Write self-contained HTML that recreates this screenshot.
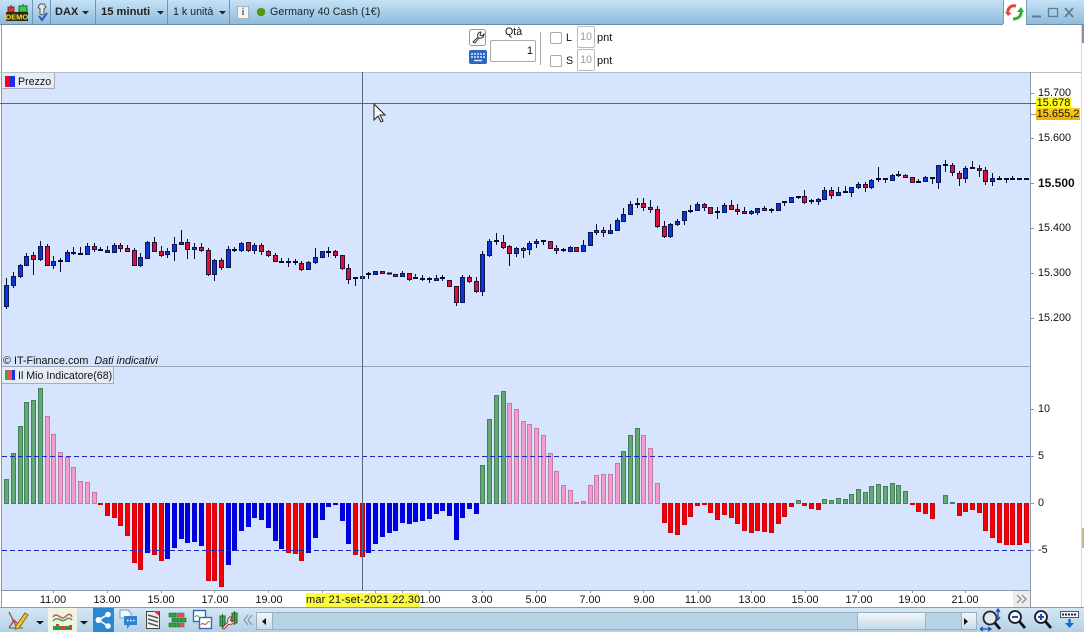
<!DOCTYPE html>
<html lang="it"><head><meta charset="utf-8"><title>DAX</title>
<style>
html,body{margin:0;padding:0;background:#fff}
#a{position:relative;width:1084px;height:632px;overflow:hidden;background:#fff;font-family:"Liberation Sans",Arial,sans-serif;font-size:10.67px;color:#111}
#a div,#a svg{position:absolute}
.t{white-space:nowrap;line-height:14px}
.s{width:1px;top:0;height:24px;background:#6f94b4}
.c{text-align:center;width:40px;top:593px;font-size:10.8px}
.p{left:1038px;font-size:10.8px}
.cb{width:10px;height:10px;border:1px solid #a9a9a9;border-radius:2px;background:#fff;left:550px}
.sp{left:577px;width:16px;height:20px;border:1px solid #bbb;border-radius:2px;color:#999;text-align:center;line-height:20px;background:#fff;font-size:10.67px}
</style></head><body><div id="a">

<div style="left:0;top:0;width:1084px;height:24px;background:linear-gradient(#c5e2f6,#90bbdc)"></div>
<div style="left:0;top:24px;width:1084px;height:1px;background:#6d8aa3"></div>
<div class="s" style="left:32px"></div><div class="s" style="left:50px"></div><div class="s" style="left:95px"></div><div class="s" style="left:167px"></div><div class="s" style="left:229px"></div>
<svg style="left:5px;top:4px" width="24" height="18" viewBox="0 0 24 18"><path d="M6 1v7M18 0v7" stroke="#333"/><rect x="3" y="3" width="6" height="5" fill="#d33" stroke="#733"/><rect x="14" y="2" width="8" height="6" fill="#3c5" stroke="#263"/><rect x="1" y="8" width="22" height="9" fill="#2a2a10"/><text x="12" y="15.500" font-family="Liberation Sans" font-size="7.500" font-weight="bold" fill="#ffe030" text-anchor="middle">DEMO</text></svg>
<svg style="left:36px;top:3px" width="14" height="20" viewBox="0 0 14 20"><path d="M4 1h4l2 3-2 2v5l-2 1-2-1V6L2 4z" fill="#dbe6ee" stroke="#555"/><path d="M3 13l3 4 5-7" fill="none" stroke="#2a5fb0" stroke-width="2"/></svg>
<div class="t" style="left:55px;top:5px;font-weight:bold;font-size:11px;color:#222">DAX</div>
<div class="t" style="left:101px;top:5px;font-weight:bold;font-size:11.2px;color:#222">15 minuti</div>
<div class="t" style="left:173px;top:5px;color:#222">1 k unità</div>
<svg style="left:0;top:0" width="240" height="24"><path d="M82 11h7l-3.500 3.500zM157 11h7l-3.500 3.500zM219 11h7l-3.500 3.500z" fill="#222"/></svg>
<div style="left:237px;top:6px;width:10px;height:11px;background:#f4f4f0;border:1px solid #a8b4bc;color:#666;font:bold 10px/11px 'Liberation Serif',serif;text-align:center">i</div>
<svg style="left:256px;top:7px" width="10" height="10"><circle cx="5" cy="5" r="4.300" fill="#4f9a12"/></svg>
<div class="t" style="left:270px;top:5px;color:#222;letter-spacing:.1px">Germany 40 Cash (1€)</div>

<div style="left:1003px;top:0;width:23px;height:25px;background:#fff"></div>
<div style="left:1003px;top:0;width:1px;height:24px;background:#7c9ab4"></div>
<div style="left:1026px;top:0;width:1px;height:24px;background:#7c9ab4"></div>
<svg style="left:1005px;top:3px" width="20" height="19" viewBox="0 0 20 19"><path d="M3 11C2 5 6 2 11 3" fill="none" stroke="#e0463e" stroke-width="3"/><path d="M0 9l3 4 4-3z" fill="#e0463e"/><path d="M16 7c1 6-3 9-8 9" fill="none" stroke="#2cae3c" stroke-width="3"/><path d="M12 9l4-5 3 5z" fill="#2cae3c"/></svg>
<svg style="left:1030px;top:5px" width="50" height="14" viewBox="0 0 50 14"><path d="M2 11.500h9" stroke="#627b94" stroke-width="2"/><rect x="18.500" y="3.500" width="9" height="8" fill="none" stroke="#627b94" stroke-width="1.300"/><path d="M35 3l8 9M43 3l-8 9" stroke="#627b94" stroke-width="1.800"/></svg>

<div style="left:1px;top:25px;width:1px;height:583px;background:#8b97a3"></div>
<div style="left:1081px;top:25px;width:1px;height:583px;background:#d8d8d8"></div>
<div style="left:1082px;top:25px;width:2px;height:18px;background:#7f93a8"></div>
<div style="left:1082px;top:528px;width:2px;height:20px;background:#c8b890"></div>

<svg style="left:469px;top:29px" width="19" height="36" viewBox="0 0 19 36"><rect x=".5" y=".5" width="16" height="16" rx="2" fill="#fff" stroke="#999"/><path d="M4 13l5-5c-1-2 0-5 3-5l-1 3 2 1 2-2c0 3-2 5-5 4l-4 5z" fill="#fff" stroke="#333"/><rect y="21" width="18" height="14" rx="2" fill="#2a68c4"/><path d="M2 25h14M2 28h14" stroke="#dfeaff" stroke-width="1.500" stroke-dasharray="2 1"/><path d="M5 31.500h8" stroke="#dfeaff" stroke-width="1.500"/></svg>
<div class="t" style="left:505px;top:25px">Qtà</div>
<div style="left:490px;top:40px;width:44px;height:20px;border:1px solid #aaa;border-radius:2px;background:#fff;text-align:right;line-height:21px;font-size:11px"><span style="margin-right:2px">1</span></div>
<div style="left:540px;top:32px;width:1px;height:33px;background:#aaa"></div>
<div class="cb" style="top:32px"></div><div class="t" style="left:566px;top:31px">L</div>
<div class="sp" style="top:26px">10</div><div class="t" style="left:597px;top:31px;font-size:11px">pnt</div>
<div class="cb" style="top:55px"></div><div class="t" style="left:566px;top:54px">S</div>
<div class="sp" style="top:49px">10</div><div class="t" style="left:597px;top:54px;font-size:11px">pnt</div>

<div style="left:2px;top:72px;width:1028px;height:518px;background:#d6e4fd"></div>
<div style="left:0;top:72px;width:1081px;height:1px;background:#b4bfcc"></div>
<div style="left:1030px;top:72px;width:1px;height:536px;background:#8f9aa6"></div>
<div style="left:2px;top:366px;width:1028px;height:1px;background:#98a4b2"></div>
<div style="left:2px;top:590px;width:1028px;height:1px;background:#8f9aa6"></div>

<svg style="left:0;top:0" width="1084" height="632">
<path stroke="#050a30" fill="none" d="M6.500 278V309M13.500 272V288M20.500 264V278M26.500 253V266M33.500 252V275M40.500 241V261M47.500 244V266M53.500 256V269M60.500 258V272M67.500 250V262M73.500 247V255M80.500 247V255M87.500 243V255M94.500 243V252M100.500 247V251M107.500 246V253M114.500 243V253M120.500 243V252M127.500 245V252M134.500 248V266M140.500 253V267M147.500 241V259M154.500 237V252M161.500 246V257M167.500 248V258M174.500 237V261M181.500 230V245M187.500 239V259M194.500 243V259M201.500 243V252M208.500 248V276M214.500 259V281M221.500 258V270M228.500 246V267M234.500 247V252M241.500 242V252M248.500 242V252M254.500 243V254M261.500 243V255M268.500 250V257M275.500 253V262M281.500 258V263M288.500 258V267M295.500 259V265M301.500 261V271M308.500 261V270M315.500 248V264M322.500 251V258M328.500 247V257M335.500 250V258M342.500 255V270M348.500 264V284M355.500 278V286M362.500 270V283M368.500 272V279M395.500 274V277M402.500 271V276M409.500 273V281M415.500 274V279M422.500 275V281M429.500 277V283M436.500 275V280M442.500 275V281M449.500 280V287M456.500 286V306M462.500 275V302M469.500 275V283M476.500 277V293M482.500 251V296M489.500 239V257M496.500 233V245M503.500 235V249M509.500 245V266M516.500 247V257M523.500 247V258M529.500 241V255M536.500 239V248M543.500 240V245M550.500 241V249M556.500 245V254M563.500 248V252M570.500 246V252M576.500 247V252M583.500 240V252M596.500 224V235M603.500 227V237M610.500 224V234M617.500 218V230M623.500 208V222M630.500 201V215M637.500 198V208M643.500 198V211M650.500 200V213M657.500 206V228M664.500 221V238M670.500 223V238M677.500 219V226M684.500 211V225M690.500 205V213M697.500 202V210M704.500 203V211M710.500 207V214M717.500 207V219M724.500 203V213M731.500 200V210M737.500 204V215M744.500 207V214M751.500 210V215M757.500 208V215M764.500 206V211M771.500 208V213M778.500 203V211M784.500 201V206M791.500 197V203M798.500 196V199M804.500 190V204M811.500 199V204M818.500 198V205M824.500 187V200M831.500 187V199M838.500 187V195M845.500 186V192M851.500 187V197M858.500 182V189M865.500 182V192M871.500 179V189M878.500 167V182M885.500 178V183M892.500 174V181M898.500 171V177M905.500 174V178M918.500 179V183M925.500 176V182M932.500 177V184M938.500 165V189M945.500 160V172M952.500 163V176M959.500 171V186M965.500 166V183M972.500 161V169M979.500 165V177M985.500 167V185M992.500 173V186M999.500 176V180M1006.500 178V183M1012.500 176V180"/>
<path stroke="#050a30" stroke-width="2" fill="none" d="M58 261h5M71 253h5M78 254h5M98 250h5M232 250h5M279 262h5M286 262h5M293 262h5M326 252h5M353 278h5M366 274h5M387 273.500h5M413 278h5M420 279h5M427 279h5M440 278h5M494 241h5M541 241h5M561 250h5M635 204h5M688 211h5M715 212h5M769 210h5M782 202h5M796 197h5M809 201h5M843 192h5M883 179h5M876 179h5M896 175h5M916 182h5M930 178h5M943 165h5M970 168h5M997 179h5M1004 179h5M1010 179h5M1017 179h5M1024 179h5"/>
<path stroke="#0a1650" fill="#0c36d8" d="M4.500 285.500h4v21h-4zM11.500 276.500h4v9h-4zM18.500 265.500h4v11h-4zM24.500 256.500h4v9h-4zM38.500 246.500h4v13h-4zM51.500 261.500h4v4h-4zM65.500 252.500h4v9h-4zM85.500 246.500h4v8h-4zM105.500 250.500h4v2h-4zM112.500 245.500h4v7h-4zM138.500 257.500h4v8h-4zM145.500 242.500h4v16h-4zM165.500 251.500h4v3h-4zM172.500 244.500h4v7h-4zM179.500 242.500h4v2h-4zM192.500 247.500h4v2h-4zM212.500 260.500h4v14h-4zM226.500 249.500h4v18h-4zM239.500 243.500h4v7h-4zM252.500 245.500h4v5h-4zM306.500 262.500h4v7h-4zM313.500 257.500h4v5h-4zM320.500 251.500h4v6h-4zM360.500 276.500h4v2h-4zM373.500 271.500h4v3h-4zM400.500 273.500h4v3h-4zM434.500 278.500h4v2h-4zM460.500 277.500h4v25h-4zM480.500 254.500h4v37h-4zM487.500 241.500h4v14h-4zM514.500 248.500h4v5h-4zM527.500 243.500h4v6h-4zM534.500 241.500h4v2h-4zM568.500 247.500h4v4h-4zM581.500 245.500h4v6h-4zM588.500 232.500h4v13h-4zM594.500 230.500h4v2h-4zM608.500 230.500h4v3h-4zM615.500 220.500h4v10h-4zM621.500 214.500h4v7h-4zM628.500 204.500h4v10h-4zM668.500 224.500h4v12h-4zM675.500 221.500h4v3h-4zM682.500 211.500h4v9h-4zM695.500 204.500h4v6h-4zM722.500 205.500h4v7h-4zM749.500 211.500h4v2h-4zM755.500 208.500h4v4h-4zM776.500 203.500h4v7h-4zM789.500 197.500h4v5h-4zM816.500 199.500h4v2h-4zM822.500 190.500h4v9h-4zM836.500 192.500h4v3h-4zM849.500 187.500h4v5h-4zM856.500 184.500h4v3h-4zM869.500 180.500h4v7h-4zM890.500 175.500h4v5h-4zM923.500 177.500h4v4h-4zM936.500 165.500h4v17h-4zM963.500 168.500h4v10h-4zM990.500 178.500h4v3h-4z"/>
<path stroke="#2a1030" fill="#d8103c" d="M31.500 255.500h4v4h-4zM45.500 246.500h4v19h-4zM92.500 246.500h4v3h-4zM118.500 245.500h4v3h-4zM125.500 248.500h4v3h-4zM132.500 250.500h4v15h-4zM152.500 242.500h4v9h-4zM159.500 251.500h4v4h-4zM185.500 242.500h4v7h-4zM199.500 247.500h4v3h-4zM206.500 250.500h4v24h-4zM219.500 260.500h4v7h-4zM246.500 242.500h4v8h-4zM259.500 245.500h4v6h-4zM266.500 251.500h4v4h-4zM273.500 255.500h4v6h-4zM299.500 263.500h4v6h-4zM333.500 251.500h4v4h-4zM340.500 255.500h4v13h-4zM346.500 268.500h4v11h-4zM380.500 271.500h4v2h-4zM393.500 274.500h4v2h-4zM407.500 273.500h4v6h-4zM447.500 280.500h4v6h-4zM454.500 286.500h4v16h-4zM467.500 277.500h4v4h-4zM474.500 281.500h4v10h-4zM501.500 242.500h4v5h-4zM507.500 246.500h4v7h-4zM521.500 248.500h4v2h-4zM548.500 241.500h4v7h-4zM554.500 248.500h4v2h-4zM574.500 247.500h4v4h-4zM601.500 230.500h4v2h-4zM641.500 203.500h4v4h-4zM648.500 207.500h4v2h-4zM655.500 209.500h4v17h-4zM662.500 226.500h4v10h-4zM702.500 204.500h4v3h-4zM708.500 207.500h4v6h-4zM729.500 205.500h4v4h-4zM735.500 209.500h4v2h-4zM742.500 211.500h4v2h-4zM762.500 208.500h4v2h-4zM802.500 196.500h4v6h-4zM829.500 190.500h4v5h-4zM863.500 184.500h4v3h-4zM903.500 175.500h4v2h-4zM910.500 177.500h4v5h-4zM950.500 165.500h4v7h-4zM957.500 173.500h4v5h-4zM977.500 168.500h4v2h-4zM983.500 170.500h4v11h-4z"/>

<path fill="#64a874" stroke="#43805a" d="M4.500 503.500v-24h4v24zM11.500 503.500v-50h4v50zM18.500 503.500v-77h4v77zM24.500 503.500v-101h4v101zM31.500 503.500v-103h4v103zM38.500 503.500v-115h4v115zM480.500 503.500v-38h4v38zM487.500 503.500v-84h4v84zM494.500 503.500v-108h4v108zM501.500 503.500v-112h4v112zM621.500 503.500v-52h4v52zM628.500 503.500v-68h4v68zM635.500 503.500v-75h4v75zM796.500 503.500v-3h4v3zM822.500 503.500v-4h4v4zM829.500 503.500v-3h4v3zM836.500 503.500v-5h4v5zM843.500 503.500v-4h4v4zM849.500 503.500v-9h4v9zM856.500 503.500v-14h4v14zM863.500 503.500v-11h4v11zM869.500 503.500v-17h4v17zM876.500 503.500v-19h4v19zM883.500 503.500v-17h4v17zM890.500 503.500v-20h4v20zM896.500 503.500v-18h4v18zM903.500 503.500v-12h4v12zM943.500 503.500v-8h4v8zM950.500 503.500v-1h4v1z"/>
<path fill="#f49ccc" stroke="#c07ca4" d="M45.500 503.500v-87h4v87zM51.500 503.500v-69h4v69zM58.500 503.500v-51h4v51zM65.500 503.500v-46h4v46zM71.500 503.500v-36h4v36zM78.500 503.500v-22h4v22zM85.500 503.500v-21h4v21zM92.500 503.500v-11h4v11zM507.500 503.500v-100h4v100zM514.500 503.500v-94h4v94zM521.500 503.500v-82h4v82zM527.500 503.500v-79h4v79zM534.500 503.500v-75h4v75zM541.500 503.500v-68h4v68zM548.500 503.500v-50h4v50zM554.500 503.500v-32h4v32zM561.500 503.500v-18h4v18zM568.500 503.500v-13h4v13zM574.500 503.500v-1h4v1zM581.500 503.500v-2h4v2zM588.500 503.500v-18h4v18zM594.500 503.500v-28h4v28zM601.500 503.500v-29h4v29zM608.500 503.500v-29h4v29zM615.500 503.500v-40h4v40zM641.500 503.500v-68h4v68zM648.500 503.500v-55h4v55zM655.500 503.500v-20h4v20z"/>
<path fill="#f40000" stroke="#d2000e" d="M98.500 503.500v1h4v-1zM105.500 503.500v12h4v-12zM112.500 503.500v14h4v-14zM118.500 503.500v22h4v-22zM125.500 503.500v32h4v-32zM132.500 503.500v59h4v-59zM138.500 503.500v66h4v-66zM152.500 503.500v51h4v-51zM159.500 503.500v57h4v-57zM206.500 503.500v77h4v-77zM212.500 503.500v77h4v-77zM219.500 503.500v83h4v-83zM286.500 503.500v49h4v-49zM293.500 503.500v50h4v-50zM299.500 503.500v57h4v-57zM353.500 503.500v51h4v-51zM360.500 503.500v53h4v-53zM662.500 503.500v19h4v-19zM668.500 503.500v29h4v-29zM675.500 503.500v31h4v-31zM682.500 503.500v21h4v-21zM688.500 503.500v13h4v-13zM695.500 503.500v2h4v-2zM702.500 503.500v1h4v-1zM708.500 503.500v9h4v-9zM715.500 503.500v16h4v-16zM722.500 503.500v11h4v-11zM729.500 503.500v14h4v-14zM735.500 503.500v20h4v-20zM742.500 503.500v27h4v-27zM749.500 503.500v29h4v-29zM755.500 503.500v27h4v-27zM762.500 503.500v28h4v-28zM769.500 503.500v29h4v-29zM776.500 503.500v20h4v-20zM782.500 503.500v13h4v-13zM789.500 503.500v3h4v-3zM802.500 503.500v2h4v-2zM809.500 503.500v5h4v-5zM816.500 503.500v6h4v-6zM910.500 503.500v1h4v-1zM916.500 503.500v8h4v-8zM923.500 503.500v10h4v-10zM930.500 503.500v15h4v-15zM957.500 503.500v12h4v-12zM963.500 503.500v8h4v-8zM970.500 503.500v6h4v-6zM977.500 503.500v9h4v-9zM983.500 503.500v27h4v-27zM990.500 503.500v34h4v-34zM997.500 503.500v39h4v-39zM1004.500 503.500v41h4v-41zM1010.500 503.500v41h4v-41zM1017.500 503.500v41h4v-41zM1024.500 503.500v39h4v-39z"/>
<path fill="#0000e4" stroke="#0000d8" d="M145.500 503.500v49h4v-49zM165.500 503.500v55h4v-55zM172.500 503.500v44h4v-44zM179.500 503.500v35h4v-35zM185.500 503.500v39h4v-39zM192.500 503.500v38h4v-38zM199.500 503.500v42h4v-42zM226.500 503.500v61h4v-61zM232.500 503.500v47h4v-47zM239.500 503.500v27h4v-27zM246.500 503.500v23h4v-23zM252.500 503.500v14h4v-14zM259.500 503.500v16h4v-16zM266.500 503.500v24h4v-24zM273.500 503.500v37h4v-37zM279.500 503.500v45h4v-45zM306.500 503.500v49h4v-49zM313.500 503.500v34h4v-34zM320.500 503.500v16h4v-16zM326.500 503.500v3h4v-3zM333.500 503.500v1h4v-1zM340.500 503.500v17h4v-17zM346.500 503.500v40h4v-40zM366.500 503.500v49h4v-49zM373.500 503.500v40h4v-40zM380.500 503.500v33h4v-33zM387.500 503.500v29h4v-29zM393.500 503.500v27h4v-27zM400.500 503.500v19h4v-19zM407.500 503.500v20h4v-20zM413.500 503.500v18h4v-18zM420.500 503.500v17h4v-17zM427.500 503.500v15h4v-15zM434.500 503.500v10h4v-10zM440.500 503.500v7h4v-7zM447.500 503.500v12h4v-12zM454.500 503.500v36h4v-36zM460.500 503.500v14h4v-14zM467.500 503.500v5h4v-5zM474.500 503.500v10h4v-10z"/>

<path d="M2 456.500H1030M2 550.500H1030" stroke="#1c28c0" stroke-dasharray="5 3" fill="none"/>
<path d="M362.500 72V590M0 103.500H1036" stroke="#56667e" fill="none"/>
<path d="M1030 93.500h4M1030 138.500h4M1030 183.500h4M1030 228.500h4M1030 273.500h4M1030 318.500h4M1030 409.500h4M1030 456.500h4M1030 503.500h4M1030 550.500h4M1030 114.500h6" stroke="#8f9aa6" fill="none"/>
<path d="M53.500 590v3M107.500 590v3M161.500 590v3M214.500 590v3M268.500 590v3M322.500 590v3M375.500 590v3M402.500 590v3M429.500 590v3M482.500 590v3M536.500 590v3M590.500 590v3M643.500 590v3M698.500 590v3M751.500 590v3M805.500 590v3M858.500 590v3M912.500 590v3M965.500 590v3" stroke="#8f9aa6" fill="none"/>
<path d="M374 104v16l4-4 3 6 2-1-3-6h5z" fill="#fff" stroke="#222"/>
</svg>

<div style="left:2px;top:73px;width:52px;height:15px;background:#e6ecf6;border-right:1px solid #aab;border-bottom:1px solid #aab"></div>
<div style="left:5px;top:76px;width:5px;height:11px;background:#f0002a"></div><div style="left:10px;top:76px;width:5px;height:11px;background:#1c30e8"></div>
<div class="t" style="left:18px;top:75px">Prezzo</div>
<div class="t" style="left:3px;top:354px;font-size:10.8px">© IT-Finance.com&nbsp; <i>Dati indicativi</i></div>

<div style="left:2px;top:367px;width:111px;height:16px;background:#e6ecf6;border:1px solid #aab;border-left:0;border-top:0"></div>
<div style="left:5px;top:370px;width:3px;height:10px;background:#2eae4c"></div><div style="left:8px;top:370px;width:4px;height:10px;background:#f0504a"></div><div style="left:12px;top:370px;width:3px;height:10px;background:#1c30e8"></div>
<div class="t" style="left:18px;top:369px">Il Mio Indicatore(68)</div>

<div class="t p" style="top:86px">15.700</div>
<div class="t p" style="top:131px">15.600</div>
<div class="t p" style="top:176px;font-weight:bold;font-size:12px">15.500</div>
<div class="t p" style="top:221px">15.400</div>
<div class="t p" style="top:266px">15.300</div>
<div class="t p" style="top:311px">15.200</div>
<div class="t" style="left:1036px;top:97px;width:35px;height:12px;background:#fdfb1c;line-height:12px;font-size:11px;text-align:center">15.678</div>
<div class="t" style="left:1036px;top:108px;width:44px;height:12px;background:linear-gradient(#fdd018,#f0b000);line-height:12px;font-size:11px;text-align:center">15.655,2</div>
<div class="t p" style="top:402px">10</div>
<div class="t p" style="top:449px">5</div>
<div class="t p" style="top:496px">0</div>
<div class="t p" style="top:543px">-5</div>

<div class="t c" style="left:33px">11.00</div><div class="t c" style="left:87px">13.00</div><div class="t c" style="left:141px">15.00</div><div class="t c" style="left:195px">17.00</div><div class="t c" style="left:249px">19.00</div>
<div class="t c" style="left:410px">1.00</div><div class="t c" style="left:462px">3.00</div><div class="t c" style="left:516px">5.00</div><div class="t c" style="left:570px">7.00</div><div class="t c" style="left:624px">9.00</div><div class="t c" style="left:678px">11.00</div><div class="t c" style="left:732px">13.00</div><div class="t c" style="left:785px">15.00</div><div class="t c" style="left:839px">17.00</div><div class="t c" style="left:892px">19.00</div><div class="t c" style="left:945px">21.00</div>
<div class="t" style="left:306px;top:593px;width:113px;height:14px;background:#fdfb40;font-size:11px;letter-spacing:.15px;text-align:center">mar 21-set-2021 22.30</div>
<div style="left:1013px;top:591px;width:17px;height:16px;background:#ececec"></div>
<svg style="left:1013px;top:591px" width="17" height="16"><path d="M4 4l4 4-4 4M9 4l4 4-4 4" fill="none" stroke="#7a8490" stroke-width="1.200"/></svg>

<div style="left:0;top:607px;width:1084px;height:25px;background:linear-gradient(#d6e8f5,#b4d0e6)"></div>
<div style="left:0;top:607px;width:1084px;height:1px;background:#8f9aa6"></div>
<div style="left:48px;top:608px;width:29px;height:24px;background:#eef4e4"></div>
<div style="left:93px;top:608px;width:21px;height:24px;background:#2a88d2"></div>
<svg style="left:0;top:608px" width="260" height="24" viewBox="0 0 260 24">
<path d="M9 4l8 16M9 20l5-8 4 4" fill="none" stroke="#a04a4a" stroke-width="1.300"/><path d="M9 20h14" stroke="#3c7a4a"/><path d="M16 18l9-13 3 2-9 13-4 1z" fill="#f4c430" stroke="#8a6a10"/>
<path d="M36 13h8l-4 3.500zM80 13h8l-4 3.500z" fill="#111"/>
<path d="M53 9c4-6 8 4 12 0s6-3 7 0" fill="none" stroke="#d05050" stroke-width="1.500"/><path d="M53 13c5-6 8 2 12-1s5-2 7 0" fill="none" stroke="#48a048" stroke-width="1.500"/><path d="M53 18h19v4H53z" fill="#2c9a3c"/><path d="M56 18h3v-2h-3zM62 18h4v4h-4zM69 17h3v5h-3z" fill="#d84040"/>
<circle cx="98.500" cy="12" r="3" fill="#fff"/><circle cx="108" cy="6.500" r="2.800" fill="#fff"/><circle cx="108" cy="18" r="2.800" fill="#fff"/><path d="M98.500 12L108 6.500M98.500 12L108 18" stroke="#fff" stroke-width="1.600"/>
<path d="M120 2h8l3 3v5h-11z" fill="#f4f8fc" stroke="#7a9ab8"/><path d="M124 8h13v9h-7l-3 4v-4h-3z" fill="#2e84d0"/><path d="M127 12.500h8" stroke="#fff" stroke-width="1.500" stroke-dasharray="1.500 1.500"/>
<rect x="146.500" y="3.500" width="13" height="17" fill="#f0f4f0" stroke="#444"/><path d="M148 7l10 3M148 11l10 3M148 15l10 3" stroke="#555" stroke-width="1.500"/><path d="M153 3h6v5z" fill="#d84040"/>
<path d="M169 5h7v4h-7zM177 5h7v4h-7zM172 10h7v4h-7zM180 10h6v4h-6zM169 15h7v4h-7zM177 15h7v4h-7z" fill="#30a040" stroke="#1c6a28" stroke-width=".6"/><path d="M177 5h7v4h-7zM180 15h4v4h-4z" fill="#d85050"/>
<rect x="193.500" y="2.500" width="12" height="11" fill="#fff" stroke="#2e6cb4" stroke-width="1.400"/><rect x="199.500" y="9.500" width="12" height="11" fill="#fff" stroke="#2e6cb4" stroke-width="1.400"/><path d="M201 17c2-4 3 1 5-1s2-3 4-2" fill="none" stroke="#d84040"/><path d="M195 9c2-3 3 0 4-1" fill="none" stroke="#30a040"/>
<path d="M220 8h5v10h-5zM232 5h5v10h-5z" fill="#40b050" stroke="#1c6a28"/><path d="M222.500 6v14M234.500 3v14" stroke="#1c6a28"/><path d="M222 20l6-6c-1-3 1-6 4-5l-2 3 2 2 3-2c0 3-3 5-6 4l-5 5z" fill="#fff" stroke="#a03030"/>
<path d="M248 7l-4 5 4 5M252 7l-4 5 4 5" fill="none" stroke="#8a98a8" stroke-width="1.200"/>
</svg>
<div style="left:256px;top:612px;width:706px;height:16px;background:#b8d2e6;border:1px solid #9ab0c2"></div>
<div style="left:256px;top:612px;width:15px;height:16px;background:linear-gradient(#f4f8fb,#c8dcea);border:1px solid #9ab0c2"></div>
<div style="left:857px;top:612px;width:67px;height:16px;background:linear-gradient(#f0f6fa,#c4dae8);border:1px solid #9ab0c2"></div>
<div style="left:961px;top:612px;width:14px;height:16px;background:linear-gradient(#f4f8fb,#c8dcea);border:1px solid #9ab0c2"></div>
<svg style="left:256px;top:612px" width="730" height="18"><path d="M10 6v7l-4-3.500zM708 6v7l4-3.500z" fill="#111"/></svg>
<svg style="left:980px;top:608px" width="104" height="24" viewBox="0 0 104 24">
<circle cx="10" cy="10" r="6.500" fill="#e4e8ec" stroke="#222" stroke-width="1.800"/><path d="M15 15l5 6" stroke="#111" stroke-width="2.800"/><path d="M18 2v9M16 4l2-3 2 3M16 9l2 3 2-3M1 21h9M3 19l-3 2 3 2M8 19l3 2-3 2" stroke="#1c4ab4" fill="none" stroke-width="1.300"/>
<circle cx="35" cy="9" r="6" fill="#f4f8fc" stroke="#1a1a2a" stroke-width="1.800"/><path d="M32 9h6" stroke="#1c4ab4" stroke-width="2"/><path d="M39 13l6 7" stroke="#111" stroke-width="2.800"/>
<circle cx="61" cy="9" r="6" fill="#f4f8fc" stroke="#1a1a2a" stroke-width="1.800"/><path d="M58 9h6M61 6v6" stroke="#1c4ab4" stroke-width="2"/><path d="M65 13l6 7" stroke="#111" stroke-width="2.800"/>
<rect x="80.500" y="3.500" width="18" height="6" fill="#f4f8fc" stroke="#556"/><path d="M82 6.500h15" stroke="#223" stroke-width="2" stroke-dasharray="2 1"/><path d="M89.500 11v5" stroke="#1c6ac4" stroke-width="2.500"/><path d="M85 15h9l-4.500 5z" fill="#1c6ac4"/>
</svg>
</div></body></html>
